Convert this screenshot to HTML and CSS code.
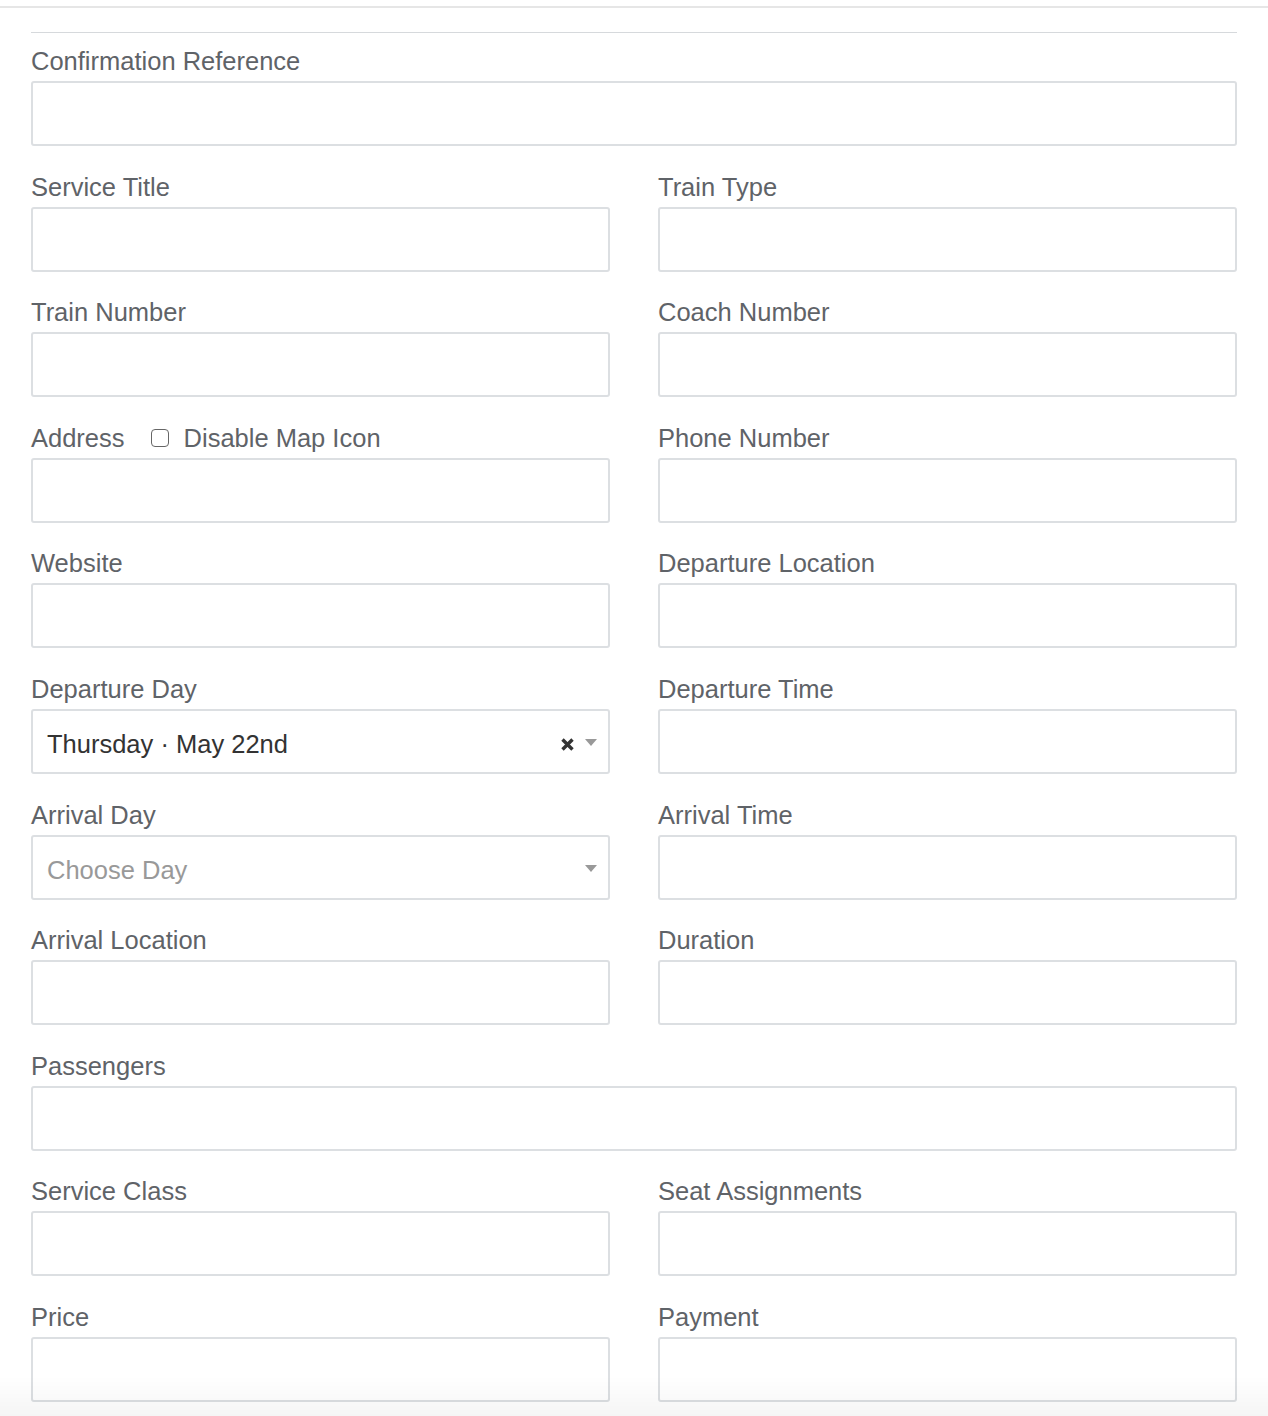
FILE: index.html
```html
<!DOCTYPE html>
<html>
<head>
    <title>Train Reservation</title>
    <link rel="stylesheet" href="styles.css">
</head>
<body>
    <div class="topbar"></div>
    <div class="container">
        <hr class="divider">

        <form class="form-grid">
            <div class="form-group full">
                <label class="field-label">Confirmation Reference</label>
                <input type="text" class="field-input">
            </div>

            <div class="form-group">
                <label class="field-label">Service Title</label>
                <input type="text" class="field-input">
            </div>
            <div class="form-group">
                <label class="field-label">Train Type</label>
                <input type="text" class="field-input">
            </div>

            <div class="form-group">
                <label class="field-label">Train Number</label>
                <input type="text" class="field-input">
            </div>
            <div class="form-group">
                <label class="field-label">Coach Number</label>
                <input type="text" class="field-input">
            </div>

            <div class="form-group">
                <div class="label-row">
                    <label class="field-label">Address</label>
                    <label class="check-label"><input type="checkbox" class="check"> Disable Map Icon</label>
                </div>
                <input type="text" class="field-input">
            </div>
            <div class="form-group">
                <label class="field-label">Phone Number</label>
                <input type="text" class="field-input">
            </div>

            <div class="form-group">
                <label class="field-label">Website</label>
                <input type="text" class="field-input">
            </div>
            <div class="form-group">
                <label class="field-label">Departure Location</label>
                <input type="text" class="field-input">
            </div>

            <div class="form-group">
                <label class="field-label">Departure Day</label>
                <div class="select-box">
                    <span class="select-value">Thursday · May 22nd</span>
                    <svg class="select-clear" width="15" height="15" viewBox="0 0 15 15">
                        <path d="M2.5 2.5 L12.5 12.5 M12.5 2.5 L2.5 12.5" stroke="#333" stroke-width="3.4"/>
                    </svg>
                    <span class="select-arrow"></span>
                </div>
            </div>
            <div class="form-group">
                <label class="field-label">Departure Time</label>
                <input type="text" class="field-input">
            </div>

            <div class="form-group">
                <label class="field-label">Arrival Day</label>
                <div class="select-box">
                    <span class="select-placeholder">Choose Day</span>
                    <span class="select-arrow"></span>
                </div>
            </div>
            <div class="form-group">
                <label class="field-label">Arrival Time</label>
                <input type="text" class="field-input">
            </div>

            <div class="form-group">
                <label class="field-label">Arrival Location</label>
                <input type="text" class="field-input">
            </div>
            <div class="form-group">
                <label class="field-label">Duration</label>
                <input type="text" class="field-input">
            </div>

            <div class="form-group full">
                <label class="field-label">Passengers</label>
                <input type="text" class="field-input">
            </div>

            <div class="form-group">
                <label class="field-label">Service Class</label>
                <input type="text" class="field-input">
            </div>
            <div class="form-group">
                <label class="field-label">Seat Assignments</label>
                <input type="text" class="field-input">
            </div>

            <div class="form-group">
                <label class="field-label">Price</label>
                <input type="text" class="field-input">
            </div>
            <div class="form-group">
                <label class="field-label">Payment</label>
                <input type="text" class="field-input">
            </div>
        </form>
    </div>
    <div class="bottom-fade"></div>
</body>
</html>
```

FILE: styles.css
```css
body {
    margin: 0;
    font-family: "Liberation Sans", Arial, sans-serif;
    color: #5f6368;
    background-color: white;
}
.topbar {
    height: 6px;
    border-bottom: 2px solid #e6e6e6;
}
.container {
    margin: 0 31px;
    padding-top: 24px;
    padding-bottom: 40px;
}
.divider {
    border: none;
    border-top: 1px solid #d6d9dc;
    margin: 0 0 13px 0;
}
.form-grid {
    display: grid;
    grid-template-columns: 1fr 1fr;
    column-gap: 48px;
    row-gap: 25.6px;
}
.form-group {
    display: flex;
    flex-direction: column;
}
.form-group.full {
    grid-column: 1 / 3;
}
.field-label {
    font-size: 25.5px;
    line-height: 30px;
    height: 30px;
    margin-bottom: 5px;
    color: #5f6368;
}
.label-row {
    display: flex;
    align-items: flex-start;
    gap: 26px;
    margin-bottom: 5px;
}
.label-row .field-label {
    margin-bottom: 0;
}
.check-label {
    display: flex;
    align-items: center;
    gap: 15px;
    font-size: 25.5px;
    line-height: 30px;
    height: 30px;
    color: #5f6368;
}
.check {
    appearance: none;
    width: 18px;
    height: 18px;
    margin: 0;
    border: 1.5px solid #666;
    border-radius: 4px;
    background: white;
}
.field-input {
    box-sizing: border-box;
    height: 65px;
    width: 100%;
    margin: 0;
    border: 2px solid #dcdfe2;
    border-radius: 3px;
    padding: 0 14px;
    font-size: 25.5px;
    font-family: "Liberation Sans", Arial, sans-serif;
    background: white;
}
.select-box {
    box-sizing: border-box;
    height: 65px;
    border: 2px solid #dcdfe2;
    border-radius: 3px;
    padding: 7px 11px 0 14px;
    display: flex;
    align-items: center;
    font-size: 25.5px;
}
.select-value {
    flex: 1;
    color: #333;
}
.select-placeholder {
    flex: 1;
    color: #999;
}
.select-clear {
    margin-right: 10px;
    margin-top: 0;
}
.select-arrow {
    width: 0;
    height: 0;
    border-left: 6px solid transparent;
    border-right: 6px solid transparent;
    border-top: 7px solid #999;
    margin-top: -4px;
}
.bottom-fade {
    position: fixed;
    left: 0;
    right: 0;
    bottom: 0;
    height: 40px;
    background: linear-gradient(to bottom, rgba(0,0,0,0), rgba(0,0,0,0.04));
    pointer-events: none;
}
```
